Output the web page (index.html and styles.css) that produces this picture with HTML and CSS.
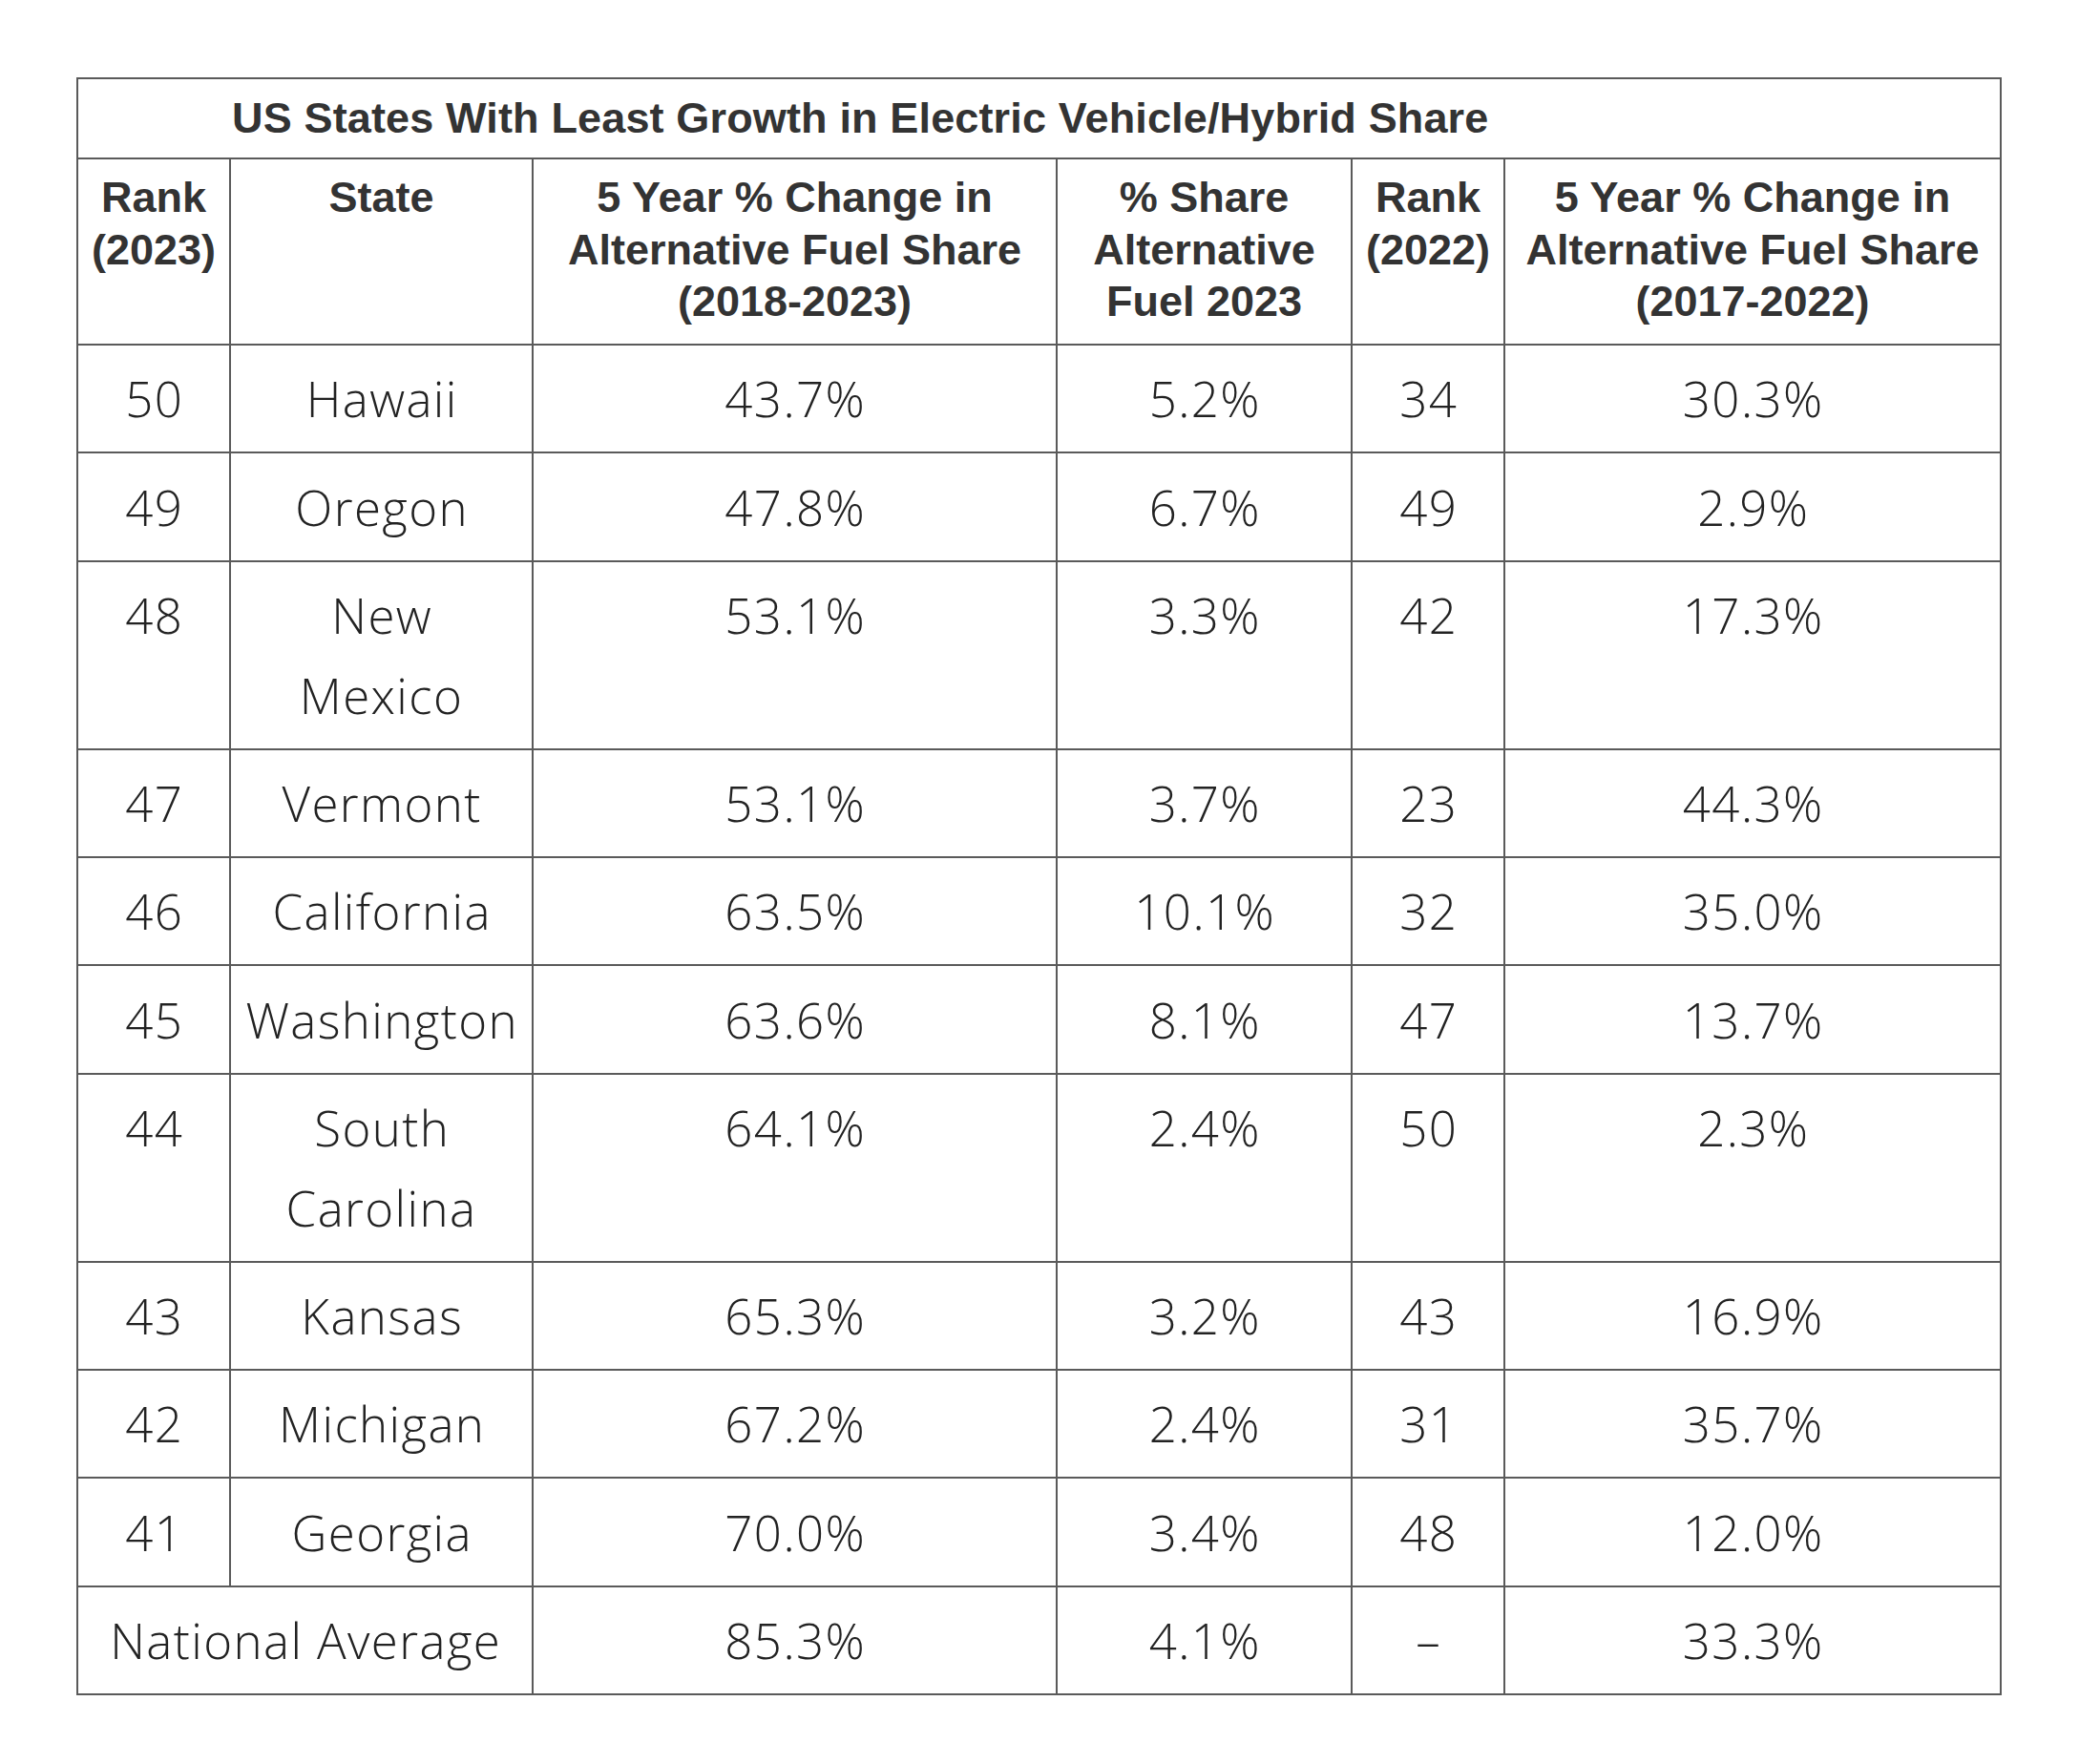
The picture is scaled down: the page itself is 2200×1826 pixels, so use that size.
FILE: index.html
```html
<!DOCTYPE html>
<html lang="en">
<head>
<meta charset="utf-8">
<title>US States With Least Growth in Electric Vehicle/Hybrid Share</title>
<link rel="stylesheet" href="styles.css">
</head>
<body>
<div class="page">
  <div class="grid">
    <div class="cell title">US States With Least Growth in Electric Vehicle/Hybrid Share</div>

    <div class="cell head">Rank<br>(2023)</div>
    <div class="cell head">State</div>
    <div class="cell head">5 Year % Change in<br>Alternative Fuel Share<br>(2018-2023)</div>
    <div class="cell head">% Share<br>Alternative<br>Fuel 2023</div>
    <div class="cell head">Rank<br>(2022)</div>
    <div class="cell head">5 Year % Change in<br>Alternative Fuel Share<br>(2017-2022)</div>

    <div class="cell">50</div><div class="cell">Hawaii</div><div class="cell">43.7%</div><div class="cell">5.2%</div><div class="cell">34</div><div class="cell">30.3%</div>
    <div class="cell">49</div><div class="cell">Oregon</div><div class="cell">47.8%</div><div class="cell">6.7%</div><div class="cell">49</div><div class="cell">2.9%</div>
    <div class="cell">48</div><div class="cell">New<br>Mexico</div><div class="cell">53.1%</div><div class="cell">3.3%</div><div class="cell">42</div><div class="cell">17.3%</div>
    <div class="cell">47</div><div class="cell">Vermont</div><div class="cell">53.1%</div><div class="cell">3.7%</div><div class="cell">23</div><div class="cell">44.3%</div>
    <div class="cell">46</div><div class="cell">California</div><div class="cell">63.5%</div><div class="cell">10.1%</div><div class="cell">32</div><div class="cell">35.0%</div>
    <div class="cell">45</div><div class="cell">Washington</div><div class="cell">63.6%</div><div class="cell">8.1%</div><div class="cell">47</div><div class="cell">13.7%</div>
    <div class="cell">44</div><div class="cell">South<br>Carolina</div><div class="cell">64.1%</div><div class="cell">2.4%</div><div class="cell">50</div><div class="cell">2.3%</div>
    <div class="cell">43</div><div class="cell">Kansas</div><div class="cell">65.3%</div><div class="cell">3.2%</div><div class="cell">43</div><div class="cell">16.9%</div>
    <div class="cell">42</div><div class="cell">Michigan</div><div class="cell">67.2%</div><div class="cell">2.4%</div><div class="cell">31</div><div class="cell">35.7%</div>
    <div class="cell">41</div><div class="cell">Georgia</div><div class="cell">70.0%</div><div class="cell">3.4%</div><div class="cell">48</div><div class="cell">12.0%</div>
    <div class="cell span2">National Average</div><div class="cell">85.3%</div><div class="cell">4.1%</div><div class="cell">–</div><div class="cell">33.3%</div>
  </div>
</div>
</body>
</html>
```

FILE: styles.css
```css
html, body {
  margin: 0;
  padding: 0;
  background: #ffffff;
}

.page {
  padding: 81px 0 0 80px;
}

.grid {
  display: grid;
  grid-template-columns: 160px 317px 549px 309px 160px 520px;
  width: 2017px;
  box-sizing: border-box;
  border-left: 2px solid #5a5a5a;
  border-top: 2px solid #5a5a5a;
}

.cell {
  box-sizing: border-box;
  border-right: 2px solid #5a5a5a;
  border-bottom: 2px solid #5a5a5a;
  padding: 13.25px 4px 14px;
  font-family: "Open Sans", "Liberation Sans", sans-serif;
  font-weight: 300;
  font-size: 51px;
  line-height: 84px;
  letter-spacing: 1.4px;
  text-indent: 1.4px;
  color: #222222;
  text-align: center;
}

.title {
  grid-column: 1 / span 6;
  text-align: left;
  padding: 14.5px 0 15.5px 161px;
  font-family: "Liberation Sans", Arial, sans-serif;
  font-weight: 700;
  font-size: 45px;
  line-height: 52px;
  letter-spacing: 0.15px;
  text-indent: 0;
  color: #333333;
}

.head {
  padding: 13px 2px 16.5px;
  font-family: "Liberation Sans", Arial, sans-serif;
  font-weight: 700;
  font-size: 45px;
  line-height: 54.5px;
  letter-spacing: 0;
  text-indent: 0;
  color: #333333;
  white-space: nowrap;
}

.span2 {
  grid-column: span 2;
}
```
